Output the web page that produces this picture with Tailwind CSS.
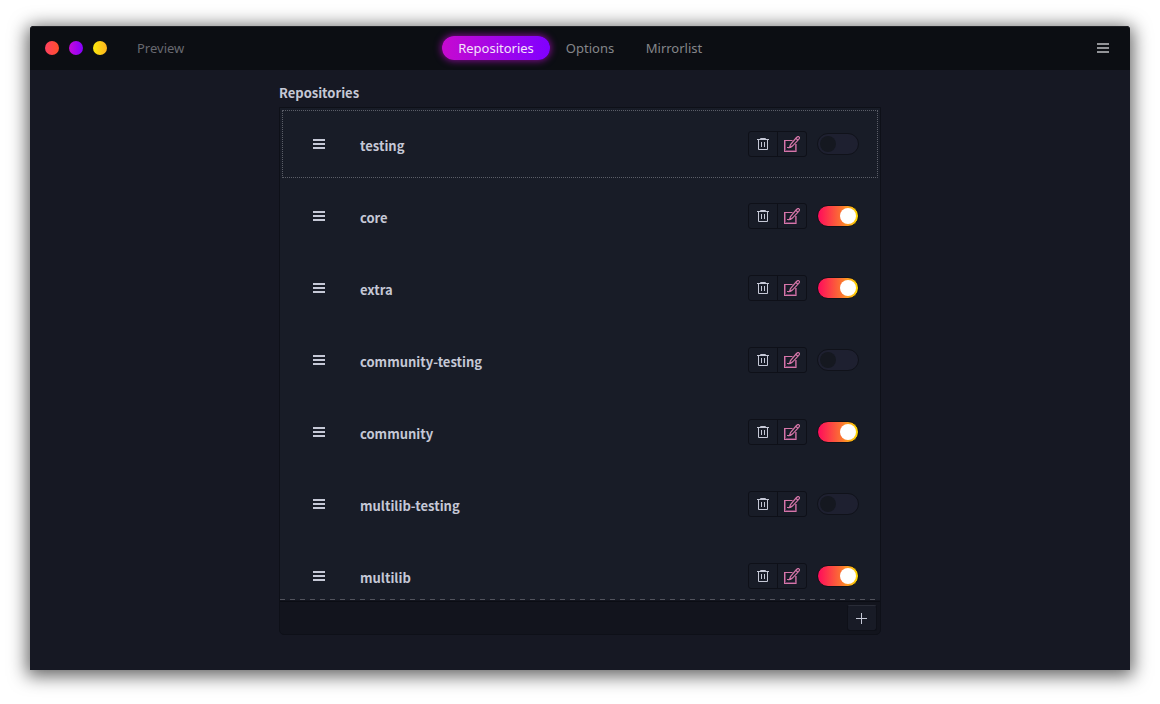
<!DOCTYPE html>
<html lang="en">
<head>
<meta charset="utf-8">
<title>Repositories</title>
<script src="https://cdn.jsdelivr.net/npm/@tailwindcss/browser@4"></script>
</head>
<body class="flex min-h-screen flex-col bg-white px-[30px] pt-[26px] pb-[34px] font-['Noto_Sans',sans-serif] text-[13px] leading-5">
<svg class="hidden">
  <symbol id="bars" viewBox="0 0 12 10"><path fill="currentColor" d="M0 0h12v2H0zM0 4h12v2H0zM0 8h12v2H0z"/></symbol>
  <symbol id="trash" viewBox="0 0 12 12"><path fill="none" stroke="currentColor" d="M0 1.500h12M3.500 1.500V.5h5v1M1.500 1.500v10h9v-10M4.500 4v5M7.500 4v5"/></symbol>
  <symbol id="edit" viewBox="0 0 16 16"><path fill="none" stroke="#6d3a63" d="M1.500 4.500v10h10V8"/><path fill="none" stroke="#d576a8" stroke-width="1.200" d="M8.500 4.500h-8v11h11.500V8M3 11.500h3.500l2-1.500M5.500 11.500l1-3 6-7c.8-.9 1.700-1.300 2.500-.6s.5 1.600-.3 2.500l-6 6.400zM12 2.500l2 1.800"/></symbol>
  <symbol id="plus" viewBox="0 0 11 11"><path fill="none" stroke="currentColor" d="M5.500 0v11M0 5.500h11"/></symbol>
</svg>
<div class="flex flex-1 flex-col rounded-t-[4px] bg-[#161823] shadow-[0_3px_18px_3px_rgba(0,0,0,0.62)]">
  <header class="grid h-11 grid-cols-[1fr_auto_1fr] items-center rounded-t-[4px] bg-[#0c0e13] inset-shadow-[0_1px_0_#202126]">
    <div class="flex items-center pl-[15px]">
      <div class="flex gap-[10px]">
        <button aria-label="Close" class="size-[14px] rounded-full bg-linear-to-r/srgb from-[#ff4060] to-[#ff4f2b]"></button>
        <button aria-label="Minimize" class="size-[14px] rounded-full bg-linear-to-r/srgb from-[#c60ad8] to-[#8500ff]"></button>
        <button aria-label="Maximize" class="size-[14px] rounded-full bg-linear-to-r/srgb from-[#fbe90c] to-[#ffb31f]"></button>
      </div>
      <button class="ml-[30px] text-[#686970]">Preview</button>
    </div>
    <nav class="flex text-[#85868a]">
      <button class="h-6 w-[108px] rounded-full bg-linear-to-r/srgb from-[#c60ad0] to-[#8000ff] pb-px text-[#f3e3fb] shadow-[0_0_7px_1px_rgba(190,10,210,0.65)]">Repositories</button>
      <button class="h-6 w-20 pb-px">Options</button>
      <button class="h-6 w-[88px] pb-px">Mirrorlist</button>
    </nav>
    <div class="flex justify-end pr-[21px]">
      <button aria-label="Menu" class="text-[#929397]"><svg class="h-[10px] w-3"><use href="#bars"/></svg></button>
    </div>
  </header>
  <main class="mx-auto flex w-full max-w-[602px] flex-col pt-[13px] font-['Noto_Sans_CJK_SC',sans-serif] text-[#c5c8d6]">
    <h1 class="mb-1 font-bold">Repositories</h1>
    <section class="overflow-hidden rounded-b-[5px] border border-[#0e1018] bg-[#12141d]">
      <ul id="list" class="h-[492px] overflow-hidden bg-[#181c27]"></ul>
      <div class="-mt-px h-px bg-[repeating-linear-gradient(90deg,#51535d_0_5px,transparent_5px_10px)]"></div>
      <div class="mt-px flex h-[33px] justify-end border-t border-[#0b0d14] pt-[3px] pr-[3px]">
        <button aria-label="Add repository" class="flex h-[26px] w-[30px] items-center justify-center rounded-[3px] border border-[#0e1018] border-t-[#292c37] bg-[#181b26] pr-px"><svg class="size-[11px]"><use href="#plus"/></svg></button>
      </div>
    </section>
  </main>
</div>
<template id="row">
  <li class="h-[72px] p-[2px]">
    <div class="flex h-[68px] items-center border border-transparent pr-[18px] pl-[30px]">
      <button aria-label="Reorder"><svg class="h-[10px] w-3"><use href="#bars"/></svg></button>
      <label class="ml-[35px] flex-1 pt-1 font-bold"></label>
      <div class="flex h-[26px] w-[59px] rounded-[3px] border border-[#0e1018]">
        <button aria-label="Delete" class="flex w-[29px] items-center justify-center border-r border-[#0e1018]"><svg class="size-3"><use href="#trash"/></svg></button>
        <button aria-label="Edit" class="flex flex-1 items-center justify-center"><svg class="size-4"><use href="#edit"/></svg></button>
      </div>
      <input type="checkbox" role="switch" class="ml-[10px] flex h-[22px] w-[42px] appearance-none items-center rounded-full border border-[#10121a] bg-[#1e2030] px-[2px] before:size-4 before:rounded-full before:bg-[#151820] checked:justify-end checked:bg-linear-to-r/srgb checked:from-[#ff0a5c] checked:via-[#fb7630] checked:via-60% checked:to-[#ffdd00] checked:before:bg-white">
    </div>
  </li>
</template>
<script>
  const repos = [["testing", false], ["core", true], ["extra", true], ["community-testing", false], ["community", true], ["multilib-testing", false], ["multilib", true]];
  const list = document.getElementById("list");
  repos.forEach(([name, on], i) => {
    const row = document.getElementById("row").content.cloneNode(true);
    const label = row.querySelector("label"), input = row.querySelector("input");
    label.textContent = name;
    label.htmlFor = input.id = "repo-" + name;
    input.checked = on;
    if (i === 0) row.querySelector("li > div").className = "flex h-[68px] items-center rounded-[1px] border border-dotted border-[#5b5e68] pr-[18px] pl-[30px]";
    list.append(row);
  });
</script>
</body>
</html>
